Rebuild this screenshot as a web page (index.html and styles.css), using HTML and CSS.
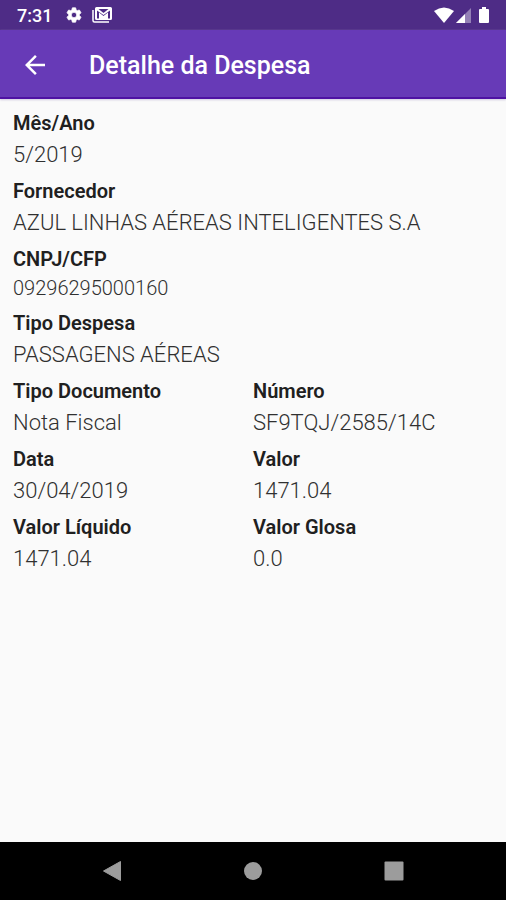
FILE: index.html
```html
<!DOCTYPE html>
<html lang="pt-BR">
<head>
<meta charset="utf-8">
<meta name="viewport" content="width=device-width, initial-scale=1">
<title>Detalhe da Despesa</title>
<link rel="stylesheet" href="styles.css">
</head>
<body>
<div class="status">
  <span class="clock">7:31</span>
  <svg class="gear" width="18" height="18" viewBox="0 0 24 24" aria-hidden="true"><path fill="currentColor" stroke="currentColor" d="M19.14 12.94c.04-.3.06-.61.06-.94 0-.32-.02-.64-.07-.94l2.03-1.58c.18-.14.23-.41.12-.61l-1.92-3.32c-.12-.22-.37-.29-.59-.22l-2.39.96c-.5-.38-1.03-.7-1.62-.94l-.36-2.54c-.04-.24-.24-.41-.48-.41h-3.84c-.24 0-.43.17-.47.41l-.36 2.54c-.59.24-1.13.57-1.62.94l-2.39-.96c-.22-.08-.47 0-.59.22L2.74 8.87c-.12.21-.08.47.12.61l2.03 1.58c-.05.3-.09.63-.09.94s.02.64.07.94l-2.03 1.58c-.18.14-.23.41-.12.61l1.92 3.32c.12.22.37.29.59.22l2.39-.96c.5.38 1.03.7 1.62.94l.36 2.54c.05.24.24.41.48.41h3.84c.24 0 .44-.17.47-.41l.36-2.54c.59-.24 1.13-.56 1.62-.94l2.39.96c.22.08.47 0 .59-.22l1.92-3.32c.12-.22.07-.47-.12-.61l-2.01-1.58zM12 15.6c-1.98 0-3.6-1.62-3.6-3.6s1.62-3.6 3.6-3.6 3.6 1.62 3.6 3.6-1.62 3.6-3.6 3.6z"/></svg>
  <svg class="mail" width="20" height="16" viewBox="0 0 20 16" aria-hidden="true"><path fill="none" stroke="currentColor" stroke-width="1.500" d="M1 3v10.500q0 1.500 1.500 1.500H17"/><path fill="currentColor" fill-rule="evenodd" d="M4.500 0h14q1.500 0 1.500 1.500v10q0 1.500-1.500 1.500h-14Q3 13 3 11.500v-10Q3 0 4.500 0zM6.500 2l5 4 5-4zM5 3.500v8h2v-6l4.500 3.500L16 5.500v6h2v-8L11.500 8z"/></svg>
  <svg class="signals" width="58" height="18" viewBox="0 0 58 18" aria-hidden="true" fill="currentColor"><path d="M0 5Q10-2 20 5L10 17z"/><path d="M22 17L37 2v15z" opacity=".4"/><path d="M22 17l9-9v9z"/><path d="M48 1h4v2h2q1 0 1 1v12q0 1-1 1h-8q-1 0-1-1V4q0-1 1-1h2z"/></svg>
</div>
<header class="appbar">
  <button class="back" aria-label="Voltar"><svg width="30" height="30" viewBox="0 0 24 24" aria-hidden="true"><path fill="currentColor" d="M20 11H7.830l5.590-5.590L12 4l-8 8 8 8 1.410-1.410L7.830 13H20z"/></svg></button>
  <h1>Detalhe da Despesa</h1>
</header>
<main>
  <dl class="details">
    <div class="wide"><dt>Mês/Ano</dt><dd>5/2019</dd></div>
    <div class="wide"><dt>Fornecedor</dt><dd>AZUL LINHAS AÉREAS INTELIGENTES S.A</dd></div>
    <div class="wide"><dt>CNPJ/CFP</dt><dd class="small">09296295000160</dd></div>
    <div class="wide"><dt>Tipo Despesa</dt><dd>PASSAGENS AÉREAS</dd></div>
    <div><dt>Tipo Documento</dt><dd>Nota Fiscal</dd></div>
    <div><dt>Número</dt><dd>SF9TQJ/2585/14C</dd></div>
    <div><dt>Data</dt><dd>30/04/2019</dd></div>
    <div><dt>Valor</dt><dd>1471.04</dd></div>
    <div><dt>Valor Líquido</dt><dd>1471.04</dd></div>
    <div><dt>Valor Glosa</dt><dd>0.0</dd></div>
  </dl>
</main>
<nav class="navbar">
  <button aria-label="Voltar"><svg width="22" height="22" viewBox="0 0 22 22" aria-hidden="true"><path fill="currentColor" stroke="currentColor" stroke-linejoin="round" d="M2.500 11L19.500 1.500v19z"/></svg></button>
  <button aria-label="Início"><svg width="22" height="22" viewBox="0 0 22 22" aria-hidden="true"><circle cx="11" cy="11" r="9" fill="currentColor"/></svg></button>
  <button aria-label="Recentes"><svg width="22" height="22" viewBox="0 0 22 22" aria-hidden="true"><rect x="1.500" y="1.500" width="19" height="19" rx="1" fill="currentColor"/></svg></button>
</nav>
</body>
</html>
```
FILE: styles.css
```css
* { box-sizing: border-box; }
body {
  margin: 0;
  min-height: 100vh;
  display: flex;
  flex-direction: column;
  background: #fafafa;
  color: #202020;
  font-family: Roboto, sans-serif;
}
button {
  display: flex;
  padding: 0;
  border: 0;
  background: none;
  color: inherit;
}
.status {
  display: flex;
  align-items: center;
  height: 30px;
  padding: 0 14px 0 17px;
  background: #4e2c86;
  color: #fff;
}
.clock { font-size: 18px; font-weight: 500; }
.gear { margin-left: 13px; }
.mail { margin-left: 9px; }
.signals { margin-left: auto; }
.appbar {
  display: flex;
  align-items: center;
  gap: 39px;
  height: 69px;
  padding: 2px 20px 0;
  background: #673ab7;
  border-bottom: 2px solid #4f12a3;
  box-shadow: 0 1px 2px #cfcbe0;
  color: #fff;
}
h1 { margin: 0; font-size: 25px; font-weight: 500; line-height: 28px; padding-top: 2px; }
main { flex: 1; padding: 10px 13px; }
.details {
  display: grid;
  grid-template-columns: 1fr 1fr;
  gap: 5px 0;
  margin: 0;
}
.wide { grid-column: 1 / -1; }
dt { font-size: 20px; font-weight: 600; line-height: 28px; }
dd { margin: 0; font-size: 22px; font-weight: 350; line-height: 35px; color: #303030; }
dd.small { font-size: 20px; font-weight: 300; line-height: 31px; }
.navbar {
  display: flex;
  justify-content: space-between;
  align-items: center;
  height: 58px;
  padding: 0 101px;
  background: #000;
  color: #9c9c9c;
}
```
